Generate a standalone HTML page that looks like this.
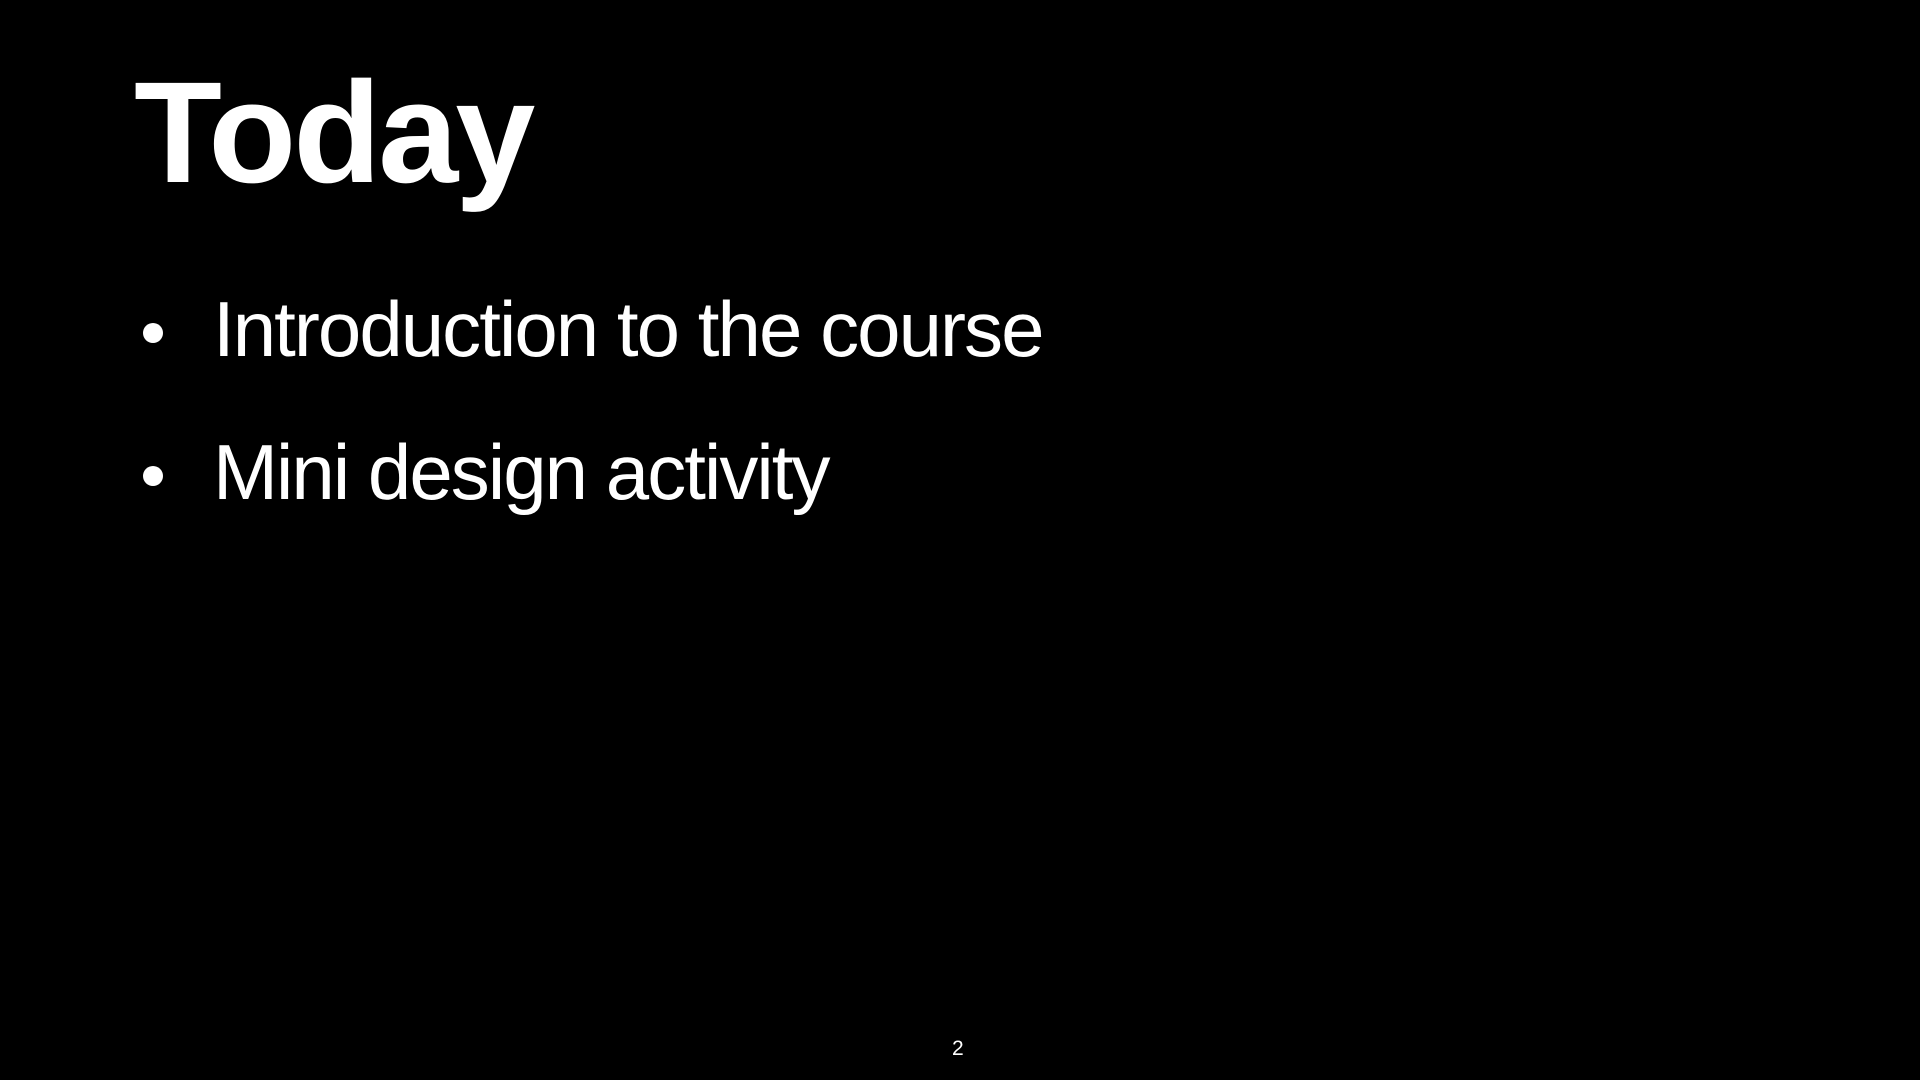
<!DOCTYPE html>
<html><head><meta charset="utf-8"><style>
html,body{margin:0;padding:0;background:#000;width:1920px;height:1080px;overflow:hidden}
body{position:relative;font-family:"Liberation Sans",Arial,sans-serif;color:#fff}
.t{position:absolute;left:134px;top:61px;font-size:144px;font-weight:bold;line-height:1;letter-spacing:-3px}
.b{position:absolute;left:213px;font-size:78px;line-height:1;white-space:nowrap;letter-spacing:-1.95px}
.d{position:absolute;width:20px;height:20px;border-radius:50%;background:#fff;left:143px}
.n{position:absolute;left:952px;top:1037px;font-size:21px}
</style></head><body>
<div class="t">Today</div>
<div class="d" style="top:323px"></div>
<div class="b" style="top:290px">Introduction to the course</div>
<div class="d" style="top:466px"></div>
<div class="b" style="top:433px">Mini design activity</div>
<div class="n">2</div>
</body></html>
